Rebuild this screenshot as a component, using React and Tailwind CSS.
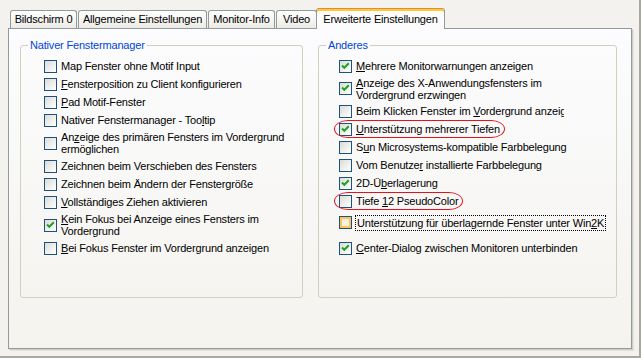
import React from 'react';

const LEFT = [
  { t: <>Map Fenster ohne Motif Input</> },
  { t: <><u>F</u>ensterposition zu Client konfigurieren</> },
  { t: <><u>P</u>ad Motif-Fenster</> },
  { t: <>Nativer Fenstermanager - Too<u>l</u>tip</> },
  { t: <>An<u>z</u>eige des primären Fensters im Vordergrund<br />ermöglichen</>, h: 'h-[28px]' },
  { t: <>Zeichnen beim Verschieben des Fensters</> },
  { t: <>Zeichnen beim Ändern der Fenstergröße</> },
  { t: <><u>V</u>ollständiges Ziehen aktivieren</> },
  { t: <><u>K</u>ein Fokus bei Anzeige eines Fensters im<br />Vordergrund</>, h: 'h-[28px]', checked: true },
  { t: <><u>B</u>ei Fokus Fenster im Vordergrund anzeigen</> },
];

const RIGHT = [
  { t: <><u>M</u>ehrere Monitorwarnungen anzeigen</>, checked: true },
  { t: <><u>A</u>nzeige des X-Anwendungsfensters im<br />Vordergrund erzwingen</>, h: 'h-[27px]', checked: true },
  { t: <>Beim Klicken Fenster im <u>V</u>ordergrund anzeigen</>, clip: true },
  { t: <><u>U</u>nterstützung mehrerer Tiefen</>, checked: true, ring: true },
  { t: <>S<u>u</u>n Microsystems-kompatible Farbbelegung</> },
  { t: <>Vom Benutze<u>r</u> installierte Farbbelegung</> },
  { t: <>2D-Ü<u>b</u>erlagerung</>, checked: true },
  { t: <>Tiefe <u>1</u>2 PseudoColor</>, ring: true },
  { t: <>Unterstützung für überlagernde Fenster unter Win<u>2</u>K</>, h: 'h-[25px]', hot: true, focus: true },
  { t: <><u>C</u>enter-Dialog zwischen Monitoren unterbinden</>, h: 'h-[26px]', checked: true },
];

function Box({ checked, hot }) {
  return (
    <span
      className={
        'w-[13px] h-[13px] shrink-0 border border-[#1c5180] flex items-center justify-center ' +
        (hot
          ? 'bg-[#f6f1e2] shadow-[inset_0_0_0_2px_#fbc35c]'
          : 'bg-linear-to-br from-[#dcdcd5] to-white')
      }
    >
      {checked && (
        <svg width="11" height="11" viewBox="0 0 11 11">
          <path d="M2 4.5 L4.3 6.8 L8.8 2.3" stroke="#21a121" strokeWidth="2" fill="none" />
        </svg>
      )}
    </span>
  );
}

function Row({ item }) {
  const label = (
    <span
      className={
        'leading-[12px] ' +
        (item.clip ? 'w-[208px] overflow-hidden whitespace-nowrap ' : '') +
        (item.focus ? 'border border-dotted border-black px-[1px] -ml-[1px] py-[1px] whitespace-nowrap ' : '')
      }
    >
      {item.t}
    </span>
  );
  return (
    <div className={'flex items-center ' + (item.h || 'h-[18px]')}>
      <div className="relative flex items-center gap-[4px] h-full">
        {item.ring && (
          <span className="absolute -left-[5px] -right-[5px] top-0 bottom-0 border border-[#e8101a] rounded-[14px/9px]" />
        )}
        <Box checked={item.checked} hot={item.hot} />
        {label}
      </div>
    </div>
  );
}

function Group({ title, items, className, pad }) {
  return (
    <fieldset className={'border border-[#d0d0bf] rounded-[3px] h-[259px] ' + className}>
      <legend className="ml-[7px] px-[2px] text-[#0046d5] leading-[13px]">{title}</legend>
      <div className={'pt-[5px] ' + pad}>
        {items.map((it, i) => (
          <Row key={i} item={it} />
        ))}
      </div>
    </fieldset>
  );
}

const TABS = [
  ['Bildschirm 0', 'w-[67px]'],
  ['Allgemeine Einstellungen', 'w-[129px]'],
  ['Monitor-Info', 'w-[67px]'],
  ['Video', 'w-[41px]'],
];

export default function App() {
  return (
    <div
      className="w-[641px] h-[358px] bg-[#f3f2ee] pl-[8px] pt-[8px] text-[11px] tracking-[-0.18px] text-black border-r-2 border-b-2 border-r-[#a9a79f] border-b-[#a9a79f] overflow-hidden"
      style={{ fontFamily: '"Liberation Sans", Arial, sans-serif' }}
    >
      {/* tab strip */}
      <div className="flex items-end h-[20px] pl-[2px]">
        {TABS.map(([t, w], i) => (
          <div
            key={t}
            className={
              'h-[18px] flex items-center justify-center border border-b-0 border-[#919b9c] rounded-t-[3px] bg-linear-to-b from-white to-[#ecebe5] leading-[13px] ' +
              w +
              (i > 0 ? ' ml-px' : '')
            }
          >
            {t}
          </div>
        ))}
        <div className="relative z-10 -ml-[1px] -mb-px w-[129px] h-[21px] flex items-center justify-center border border-b-0 border-[#919b9c] border-t-[#e68b2c] rounded-t-[3px] bg-[#fcfcfd] shadow-[inset_0_2px_0_#ffc73c] pt-[1px] leading-[13px]">
          Erweiterte Einstellungen
        </div>
      </div>

      {/* panel */}
      <div className="w-[624px] h-[321px] border border-[#919b9c] bg-linear-to-b from-[#fcfcfe] to-[#f4f3ee] shadow-[1px_1px_0_#d0cec6,2px_2px_0_#e4e2dc] flex items-start gap-[15px] pl-[11px] pt-[10px]">
        <Group title="Nativer Fenstermanager" items={LEFT} className="w-[283px]" pad="pl-[23px]" />
        <Group title="Anderes" items={RIGHT} className="w-[299px]" pad="pl-[20px]" />
      </div>
    </div>
  );
}
